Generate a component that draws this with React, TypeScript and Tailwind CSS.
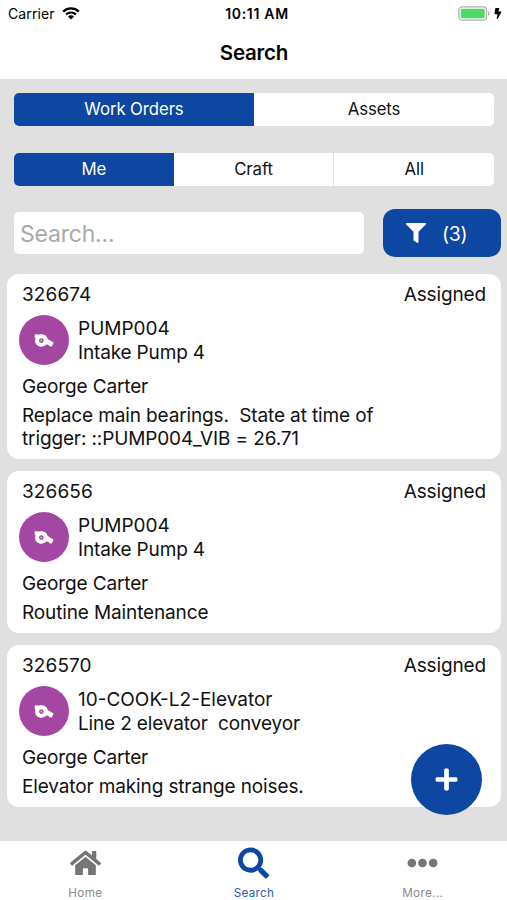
import React, { useState } from "react";
import {
  FaBolt,
  FaEllipsisH,
  FaFilter,
  FaHome,
  FaPlus,
  FaSearch,
} from "react-icons/fa";

interface WorkOrder {
  id: string;
  status: string;
  asset: string;
  assetName: string;
  assignee: string;
  description: string;
}

const workOrders: WorkOrder[] = [
  {
    id: "326674",
    status: "Assigned",
    asset: "PUMP004",
    assetName: "Intake Pump 4",
    assignee: "George Carter",
    description:
      "Replace main bearings.  State at time of\ntrigger: ::PUMP004_VIB = 26.71",
  },
  {
    id: "326656",
    status: "Assigned",
    asset: "PUMP004",
    assetName: "Intake Pump 4",
    assignee: "George Carter",
    description: "Routine Maintenance",
  },
  {
    id: "326570",
    status: "Assigned",
    asset: "10-COOK-L2-Elevator",
    assetName: "Line 2 elevator  conveyor",
    assignee: "George Carter",
    description: "Elevator making strange noises.",
  },
];

function StatusBar() {
  return (
    <div className="grid h-7 grid-cols-3 items-center pr-[5px] pl-2 text-[14px] leading-none">
      <div className="flex items-center gap-[7px]">
        <span className="tracking-[0.1px]">Carrier</span>
        <svg width="18" height="13" viewBox="0 0 18 13" fill="none" className="-mt-[2px]">
          <path d="M1.2 4.6C5.6 0.4 12.4 0.4 16.8 4.6" stroke="#000" strokeWidth="2.3" />
          <path d="M4 7.5C6.8 4.8 11.2 4.8 14 7.5" stroke="#000" strokeWidth="2.2" />
          <path d="M9 12.6L5.9 9.5C7.6 7.9 10.4 7.9 12.1 9.5Z" fill="#000" />
        </svg>
      </div>
      <span className="pl-1 text-center font-semibold tracking-[0.7px]">
        10:11 AM
      </span>
      <div className="-mt-[2px] flex items-center justify-end gap-[4px]">
        <svg width="32" height="15" viewBox="0 0 32 15" fill="none">
          <rect x="0.9" y="0.9" width="27.6" height="13.2" rx="3.4" stroke="#b0b0b0" strokeWidth="1.3" />
          <rect x="2.7" y="2.7" width="24" height="9.6" rx="1.4" fill="#4cd964" />
          <path d="M30 5.2C32 6 32 9 30 9.8Z" fill="#b0b0b0" />
        </svg>
        <FaBolt className="h-[11px] w-[8px]" />
      </div>
    </div>
  );
}

interface SegmentedProps {
  options: string[];
  selected: string;
  onSelect: (option: string) => void;
}

function Segmented({ options, selected, onSelect }: SegmentedProps) {
  return (
    <div className="flex h-[33px] overflow-hidden rounded-[5px] bg-white">
      {options.map((option, i) => (
        <button
          key={option}
          onClick={() => onSelect(option)}
          className={`flex-1 pt-[2px] text-[16.8px] tracking-[-0.1px] ${
            option === selected ? "bg-[#0d47a1] text-white" : "text-[#111]"
          } ${i > 1 ? "border-l border-[#e0e0e0]" : ""}`}
        >
          {option}
        </button>
      ))}
    </div>
  );
}

function PumpIcon() {
  return (
    <svg width="20" height="15" viewBox="0 0 20 15" className="mt-px">
      <path
        d="M0.8 1.2L5 1.6C9.4 0.2 13.4 2.8 13.6 6L19.6 9.6L17.8 13.6L15.4 13.2L14.4 11.8L12.2 11.6C10.2 14.2 5.6 14.6 2.8 12C1 10.2 0.6 7.6 1.6 5.4L0.6 4.6Z"
        fill="#fff"
      />
      <circle cx="7.3" cy="7.6" r="2.3" fill="#a347a3" />
      <circle cx="7.3" cy="7.6" r="1" fill="#d5a5d6" />
    </svg>
  );
}

function WorkOrderCard({ order }: { order: WorkOrder }) {
  return (
    <div className="rounded-[12px] bg-white px-[15px] py-[9px] text-[19px] leading-[23px] tracking-[-0.13px] whitespace-pre text-[#111]">
      <div className="flex justify-between">
        <span className="tracking-[0.1px]">{order.id}</span>
        <span>{order.status}</span>
      </div>
      <div className="-ml-[3px] flex items-center gap-[9px] pt-[9px]">
        <div className="flex h-[50px] w-[50px] items-center justify-center rounded-full bg-[#a347a3]">
          <PumpIcon />
        </div>
        <div className="pt-[2px] leading-[23.5px]">
          <p className="tracking-normal">{order.asset}</p>
          <p className="tracking-[-0.16px]">{order.assetName}</p>
        </div>
      </div>
      <p className="pt-[10px]">{order.assignee}</p>
      <p className="pt-[6px]">{order.description}</p>
    </div>
  );
}

export default function App() {
  const [searchType, setSearchType] = useState<string>("Work Orders");
  const [owner, setOwner] = useState<string>("Me");
  const [query, setQuery] = useState<string>("");

  return (
    <div className="relative flex h-[900px] w-[507px] flex-col overflow-hidden bg-[#e0e0e0] font-['Inter',sans-serif] text-black">
      <header className="h-[79px] bg-white">
        <StatusBar />
        <h1 className="pt-[11px] pl-px text-center text-[20.5px] leading-7 font-semibold tracking-[-0.2px]">
          Search
        </h1>
      </header>

      <main className="flex-1">
        <div className="flex flex-col gap-[27px] pt-[13.5px] pr-[13px] pl-[14px]">
          <Segmented
            options={["Work Orders", "Assets"]}
            selected={searchType}
            onSelect={setSearchType}
          />
          <Segmented
            options={["Me", "Craft", "All"]}
            selected={owner}
            onSelect={setOwner}
          />
        </div>

        <div className="flex items-center gap-[19px] pt-[23.5px] pr-[6px] pl-[14px]">
          <input
            value={query}
            onChange={(e) => setQuery(e.target.value)}
            placeholder="Search..."
            className="h-[42px] min-w-0 flex-1 rounded-[5px] bg-white px-[6px] pt-[2px] text-[23px] tracking-[-0.2px] outline-none placeholder:text-[#aaa]"
          />
          <button className="flex h-[48px] w-[118px] items-center gap-[16px] rounded-[12px] bg-[#0d47a1] pl-[23px] text-[19.5px] tracking-[-0.3px] text-white">
            <FaFilter size={20} />
            <span className="pt-[3px]">(3)</span>
          </button>
        </div>

        <div className="flex flex-col gap-3 pt-[16.5px] pr-[6px] pl-[7px]">
          {workOrders.map((order) => (
            <WorkOrderCard key={order.id} order={order} />
          ))}
        </div>
      </main>

      {/* Floating add button */}
      <button className="absolute top-[744px] left-[411px] flex h-[71px] w-[71px] items-center justify-center rounded-full bg-[#0d47a1] text-white">
        <FaPlus size={25} />
      </button>

      <nav className="grid h-[59px] grid-cols-3 bg-white pl-px text-[11.7px] leading-4 tracking-[0.3px] text-[#8a8a8a]">
        <button className="flex flex-col items-center">
          <FaHome className="mt-[6px] h-[32px] w-[31px] text-[#757575]" />
          <span className="mt-[6px]">Home</span>
        </button>
        <button className="flex flex-col items-center text-[#0d47a1]">
          <FaSearch className="mt-[6px] h-[32px] w-[31px]" />
          <span className="mt-[6px] text-[#2a5db0]">Search</span>
        </button>
        <button className="flex flex-col items-center">
          <FaEllipsisH className="mt-[6px] h-[32px] w-[31px] text-[#757575]" />
          <span className="mt-[6px]">More...</span>
        </button>
      </nav>
    </div>
  );
}
